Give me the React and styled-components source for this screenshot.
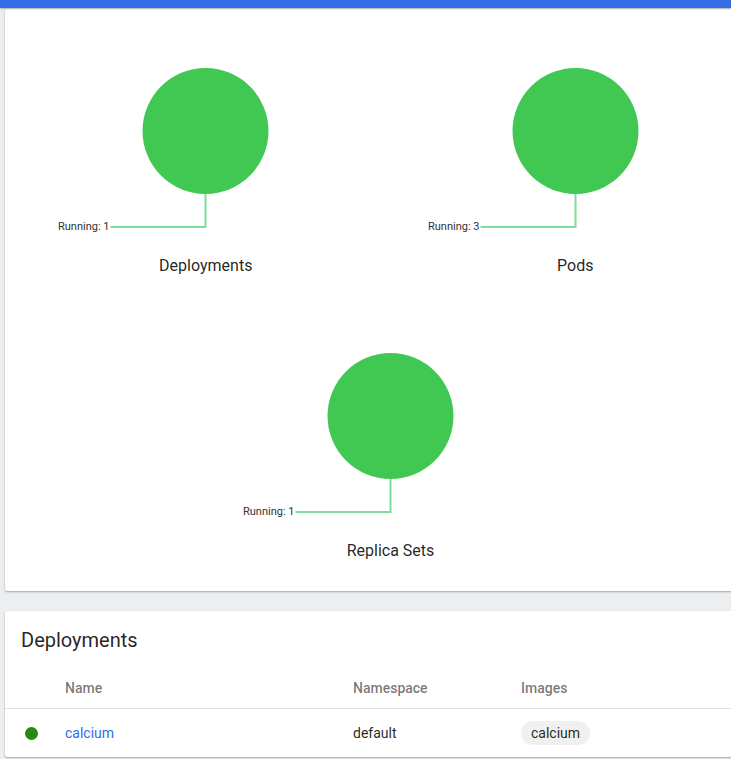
import React from 'react';
import styled, { createGlobalStyle } from 'styled-components';

const GlobalStyle = createGlobalStyle`
  html, body {
    margin: 0;
    padding: 0;
    overflow: hidden;
    background: #edeef0;
    font-family: Roboto, "Noto Sans", Arial, sans-serif;
  }
`;

const Page = styled.div`
  min-height: 759px;
  overflow: hidden;
  background: #edeef0;
`;

const TopBar = styled.div`
  height: 8px;
  background: #326de6;
  box-shadow: 0 1px 2px rgba(0, 0, 0, 0.25);
  position: relative;
  z-index: 1;
`;

const Content = styled.div`
  display: flex;
  flex-direction: column;
  gap: 20px;
  padding: 1px 0 0 5px;
`;

const Card = styled.div`
  width: 771px;
  box-sizing: border-box;
  background: #fff;
  border-radius: 2px;
  box-shadow: 0 1px 2px rgba(0, 0, 0, 0.3), 0 0 1px rgba(0, 0, 0, 0.12);
`;

const ChartGrid = styled(Card)`
  display: flex;
  flex-wrap: wrap;
  justify-content: center;
  padding: 1px 16px 11px;
`;

const ChartItem = styled.div`
  width: 369.5px;
  display: flex;
  flex-direction: column;
  align-items: center;
  margin-bottom: 13px;
`;

const ChartTitle = styled.div`
  font-size: 16px;
  line-height: 32px;
  color: rgba(0, 0, 0, 0.87);
  text-align: center;
`;

const Heading = styled.div`
  font-size: 20px;
  line-height: 26px;
  color: rgba(0, 0, 0, 0.87);
  padding: 16px 16px 15px;
`;

const Row = styled.div`
  display: grid;
  grid-template-columns: 60px 288px 168px 1fr;
  align-items: center;
  height: ${p => (p.$head ? '40px' : '48px')};
  border-bottom: ${p => (p.$head ? '1px solid #e0e0e0' : 'none')};
  font-size: 14px;
  font-weight: ${p => (p.$head ? 500 : 400)};
  color: ${p => (p.$head ? 'rgba(0, 0, 0, 0.54)' : 'rgba(0, 0, 0, 0.87)')};
`;

const StatusCell = styled.div`
  padding-left: 20px;
  display: flex;
  align-items: center;
`;

const Dot = styled.span`
  width: 13px;
  height: 13px;
  border-radius: 50%;
  background: #2a8a10;
`;

const NameLink = styled.a`
  color: #326de6;
  text-decoration: none;
`;

const Chip = styled.span`
  display: inline-flex;
  align-items: center;
  height: 24px;
  padding: 0 10px;
  border-radius: 12px;
  background: #f0f0f0;
  color: rgba(0, 0, 0, 0.87);
`;

const charts = [
  { title: 'Deployments', running: 1 },
  { title: 'Pods', running: 3 },
  { title: 'Replica Sets', running: 1 },
];

const StatusChart = ({ running }) => {
  const cx = 184.5;
  const cy = 121;
  const r = 63;
  const ly = 217;
  return (
    <svg width="369" height="240" viewBox="0 0 369 240">
      <circle cx={cx} cy={cy} r={r} fill="#40c853" />
      <polyline
        points={`${cx},${cy + r} ${cx},${ly} ${cx - 95},${ly}`}
        fill="none"
        stroke="#7fdc9a"
        strokeWidth="2"
      />
      <text
        x={cx - 96}
        y={ly}
        textAnchor="end"
        dominantBaseline="middle"
        fontSize="11"
        fontFamily="Roboto, sans-serif"
        fill="#333"
      >
        Running: {running}
      </text>
    </svg>
  );
};

const App = () => (
  <Page>
    <GlobalStyle />
    <TopBar />
    <Content>
      <ChartGrid>
        {charts.map(c => (
          <ChartItem key={c.title}>
            <StatusChart running={c.running} />
            <ChartTitle>{c.title}</ChartTitle>
          </ChartItem>
        ))}
      </ChartGrid>
      <Card>
        <Heading>Deployments</Heading>
        <Row $head>
          <div />
          <div>Name</div>
          <div>Namespace</div>
          <div>Images</div>
        </Row>
        <Row>
          <StatusCell>
            <Dot />
          </StatusCell>
          <div>
            <NameLink href="#">calcium</NameLink>
          </div>
          <div>default</div>
          <div>
            <Chip>calcium</Chip>
          </div>
        </Row>
      </Card>
    </Content>
  </Page>
);

export default App;
